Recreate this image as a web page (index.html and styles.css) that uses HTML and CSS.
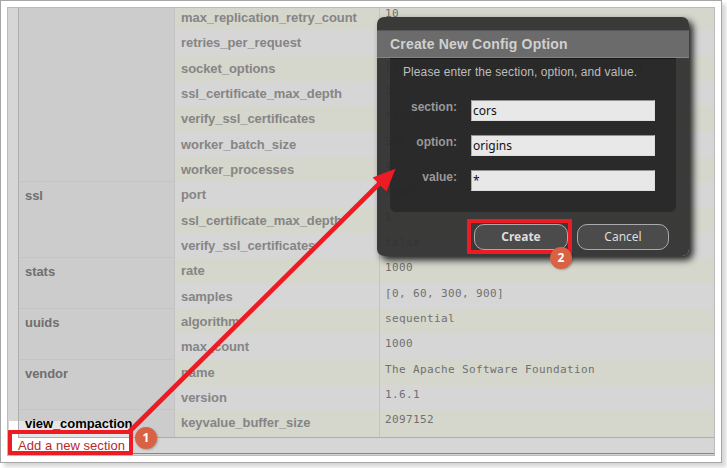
FILE: index.html
```
<!DOCTYPE html>
<html lang="en">
<head>
<meta charset="utf-8">
<title>Configuration</title>
<link rel="stylesheet" href="styles.css">
</head>
<body>
<div class="frame">
  <main class="shot">
    <div class="config">
      <section class="group"><h2></h2><dl>
        <dt>max_replication_retry_count</dt><dd class="first">10</dd>
        <dt>retries_per_request</dt><dd>10</dd>
        <dt>socket_options</dt><dd>[{keepalive, true}, {nodelay, false}]</dd>
        <dt>ssl_certificate_max_depth</dt><dd>3</dd>
        <dt>verify_ssl_certificates</dt><dd>false</dd>
        <dt>worker_batch_size</dt><dd>500</dd>
        <dt>worker_processes</dt><dd>4</dd>
      </dl></section>
      <section class="group even"><h2>ssl</h2><dl>
        <dt>port</dt><dd>6984</dd>
        <dt>ssl_certificate_max_depth</dt><dd>1</dd>
        <dt>verify_ssl_certificates</dt><dd>false</dd>
      </dl></section>
      <section class="group"><h2>stats</h2><dl>
        <dt>rate</dt><dd>1000</dd>
        <dt>samples</dt><dd>[0, 60, 300, 900]</dd>
      </dl></section>
      <section class="group"><h2>uuids</h2><dl>
        <dt>algorithm</dt><dd>sequential</dd>
        <dt>max_count</dt><dd>1000</dd>
      </dl></section>
      <section class="group"><h2>vendor</h2><dl>
        <dt>name</dt><dd>The Apache Software Foundation</dd>
        <dt>version</dt><dd>1.6.1</dd>
      </dl></section>
      <section class="group last"><h2><span class="lit">view_compaction</span></h2><dl>
        <dt>keyvalue_buffer_size</dt><dd>2097152</dd>
      </dl></section>
    </div>
    <footer class="foot"><a class="add">Add a new section</a></footer>
  </main>
</div>
<div class="spotlight"></div>

<form class="dialog">
  <h1>Create New Config Option</h1>
  <div class="fields">
    <p>Please enter the section, option, and value.</p>
    <label><b>section:</b><span class="input">cors</span></label>
    <label><b>option:</b><span class="input">origins</span></label>
    <label><b>value:</b><span class="input">*</span></label>
  </div>
  <div class="buttons">
    <button type="button" class="primary">Create</button>
    <button type="button">Cancel</button>
  </div>
</form>

<svg class="arrow" width="727" height="468" viewBox="0 0 727 468">
  <path d="M129 432L382 181" stroke="#ed1c24" stroke-width="4.6" fill="none"/>
  <path d="M395.500 168.700L372.600 177.500L386.500 191.500Z" fill="#ed1c24"/>
</svg>
<div class="mark mark-add"></div>
<div class="mark mark-create"></div>
<div class="badge one">1</div>
<div class="badge two">2</div>
</body>
</html>
```
FILE: styles.css
```
* { box-sizing: border-box; }
body {
  margin: 0;
  width: 727px;
  height: 468px;
  overflow: hidden;
  position: relative;
  background: #fff;
  font-family: "Liberation Sans", sans-serif;
}
.frame {
  width: 722px;
  height: 463px;
  padding: 6px;
  border: 1px solid #a6a6a6;
  background: #fff;
  box-shadow: 4px 4px 4px rgba(0, 0, 0, .16);
}
.shot {
  width: 708px;
  height: 449px;
  border: 1px solid #bababa;
  background: #d6d6d6;
  overflow: hidden;
  display: flex;
  flex-direction: column;
}
.config {
  flex: none;
  height: 430px;
  margin-left: 10px;
  border-left: 1px solid #adadad;
  border-bottom: 1px solid #adadad;
  display: flex;
  flex-direction: column;
  justify-content: flex-end;
}
.group { display: grid; grid-template-columns: 156px 1fr; flex: none; }
h2 {
  margin: 0;
  padding: 6px 0 0 6px;
  font-size: 13px;
  line-height: 15px;
  letter-spacing: -.06px;
  color: #6f6f6f;
  background: #ccc;
  border-right: 1px solid #c4c4c4;
  border-bottom: 1px solid #c4c4c4;
}
.last h2 { border-bottom: 0; }
.lit { color: #000; position: relative; z-index: 2; }
dl { margin: 0; display: grid; grid-template-columns: 205px 1fr; grid-auto-rows: 25.33px; }
.last dl { grid-auto-rows: 26.8px; }
.last h2 { padding-top: 5.5px; }
dt {
  padding-left: 6px;
  font-size: 13px;
  font-weight: bold;
  line-height: 25px;
  letter-spacing: -.07px;
  color: #858585;
  border-right: 1px solid #c4c4c8;
}
dd {
  margin: 0;
  padding-left: 5px;
  font: 11px/19px "DejaVu Sans Mono", monospace;
  letter-spacing: .38px;
  color: #707070;
}
.first { line-height: 17px; }
dt:nth-of-type(odd), dd:nth-of-type(odd) { background: #d5d6cc; }
.even dt, .even dd { background: #d6d6d6 !important; }
.even dt:nth-of-type(even), .even dd:nth-of-type(even) { background: #d5d6cc !important; }
.foot {
  height: 16px;
  flex: none;
  border-bottom: 1px solid #858585;
  padding-left: 10px;
  line-height: 15px;
  font-size: 13px;
}
.add {
  position: relative;
  z-index: 2;
  letter-spacing: .05px;
  color: #b52a2a;
}
.spotlight {
  position: absolute;
  left: 9px;
  top: 421px;
  width: 123px;
  height: 34px;
  background:
    linear-gradient(#adadad, #adadad) 9px 16px / 114px 1px no-repeat,
    linear-gradient(#adadad, #adadad) 9px 0 / 1px 16px no-repeat,
    linear-gradient(#e6e6e6, #e6e6e6) 9px 0 / 114px 16px no-repeat,
    #fff;
}
.dialog {
  position: absolute;
  z-index: 3;
  left: 377px;
  top: 17px;
  width: 312px;
  height: 239px;
  padding-top: 13px;
  border-radius: 7px;
  background: rgba(48, 48, 48, .94);
  box-shadow: 4px 4px 7px rgba(0, 0, 0, .85);
}
h1 {
  margin: 0;
  height: 28px;
  padding-left: 13px;
  font-size: 14px;
  line-height: 26px;
  letter-spacing: .18px;
  color: #d0d0d0;
  background: #6b6b6b;
  border-top: 1px solid #575757;
  border-bottom: 1px solid #858585;
}
.fields {
  margin: 0 13px;
  height: 154px;
  padding: 6px 21px 0 13px;
  border-top: 1px solid #181818;
  border-radius: 0 0 6px 6px;
  background: rgba(36, 36, 36, .7);
}
p { margin: 0 0 20px; font-size: 12px; line-height: 15px; letter-spacing: .09px; color: #bdbdbd; white-space: nowrap; }
label { display: flex; justify-content: space-between; height: 35px; }
label b { width: 54px; text-align: right; font-size: 12px; line-height: 14px; color: #999; }
.input {
  width: 184px;
  height: 21px;
  padding-left: 1px;
  background: #e8e8e8;
  border: 1px solid #ddd;
  border-top-color: #929292;
  border-left-color: #aaa;
  font: 12px/19px "Noto Sans", sans-serif;
  color: #111;
}
.buttons { display: flex; gap: 9px; padding: 12px 0 0 97px; }
button {
  width: 94px;
  height: 26px;
  padding: 0;
  border: 1px solid #aaa;
  border-radius: 10px;
  background: #4b4b4b;
  color: #ddd;
  font: 12px/22px "Noto Sans", sans-serif;
}
button + button { width: 92px; }
.primary { font-weight: bold; }
.arrow { position: absolute; left: 0; top: 0; z-index: 4; }
.mark { position: absolute; z-index: 5; border: 4px solid #ed1c24; border-radius: 1px; }
.mark-add { left: 8px; top: 430px; width: 125px; height: 25px; }
.mark-create { left: 467px; top: 219px; width: 105px; height: 35px; }
.badge {
  position: absolute;
  z-index: 6;
  width: 22px;
  height: 22px;
  border-radius: 50%;
  background: #d96245;
  color: #fff;
  text-align: center;
  font: bold 12px/22px "Noto Sans", sans-serif;
  box-shadow: 1px 1px 2px rgba(0, 0, 0, .25);
}
.one { left: 135px; top: 427px; }
.two { left: 550px; top: 247px; }
```
